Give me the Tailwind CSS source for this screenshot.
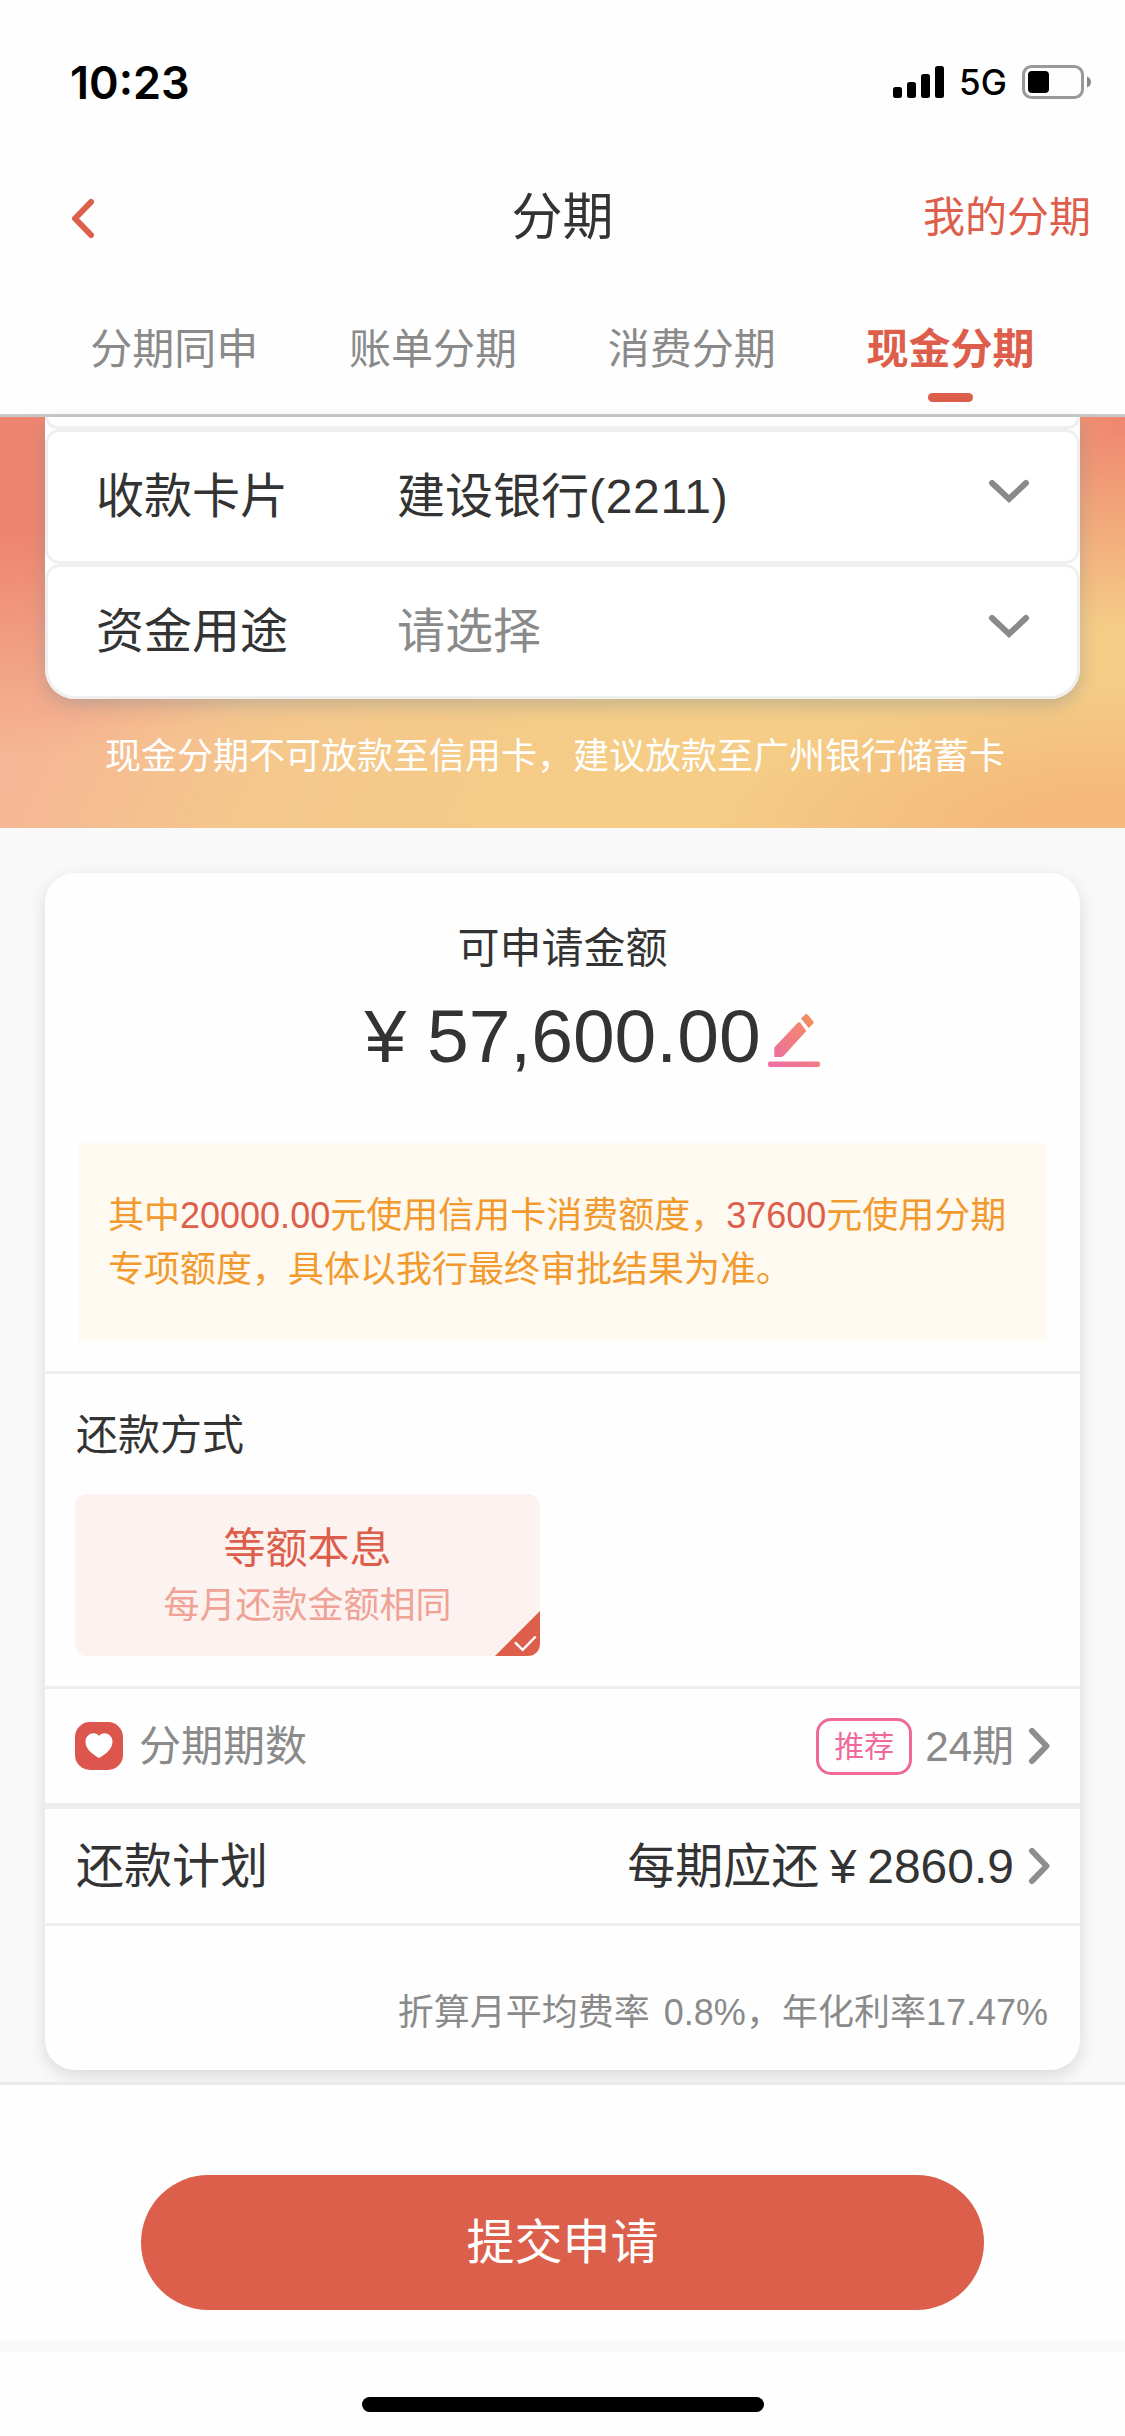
<!DOCTYPE html>
<html lang="zh-CN">
<head>
<meta charset="utf-8">
<title>分期</title>
<script src="https://cdn.jsdelivr.net/npm/@tailwindcss/browser@4"></script>
</head>
<body class="w-[1125px] h-[2436px] overflow-hidden bg-[#f9f9f9] text-[#333] font-['Liberation_Sans','Noto_Sans_CJK_SC',sans-serif] flex flex-col">
<header class="h-[417px] shrink-0 bg-[#fefefe] border-b-3 border-[#c9c9c9] flex flex-col">
  <div class="h-[150px] flex items-center justify-between pl-[70px] pr-[33px] pt-[14px] font-['Inter',sans-serif] text-black">
    <span class="text-[45px] font-semibold leading-none">10:23</span>
    <div class="flex items-center">
      <svg class="w-[51px] h-[32px]" viewBox="0 0 51 32"><rect x="0" y="21" width="9" height="11" rx="2.5"/><rect x="14" y="16" width="9" height="16" rx="2.5"/><rect x="28" y="8" width="9" height="24" rx="2.5"/><rect x="42" y="0" width="9" height="32" rx="2.5"/></svg>
      <span class="w-[48px] ml-[15px] text-[35px] font-medium leading-none">5G</span>
      <svg class="ml-[15px] w-[70px] h-[34px]" viewBox="0 0 70 34"><rect x="1.5" y="1.5" width="59" height="31" rx="8" fill="none" stroke="#999" stroke-width="3"/><rect x="6" y="6" width="21" height="22" rx="4"/><path d="M65 11.5q4 1.500 4 5.500t-4 5.500z" fill="#888"/></svg>
    </div>
  </div>
  <nav class="h-[132px] grid grid-cols-3 items-center pl-[69px] pr-[34px] pt-[3px] text-[#dd5e4b]">
    <svg class="w-[26px] h-[42px]" viewBox="0 0 26 42" fill="none" stroke="currentColor" stroke-width="6" stroke-linecap="round" stroke-linejoin="round"><path d="M22 5 6 21.500 22 38"/></svg>
    <h1 class="text-[51px] text-[#333] whitespace-nowrap justify-self-center mr-[35px] leading-none">分期</h1>
    <a class="text-[42px] justify-self-end leading-none">我的分期</a>
  </nav>
  <div class="h-[132px] px-[45px] grid grid-cols-4 text-center text-[42px] leading-[136px] text-[#8a8a8a]">
    <span>分期同申</span><span>账单分期</span><span>消费分期</span>
    <span class="relative font-bold text-[#dd5e4b]">现金分期<i class="absolute left-1/2 -ml-[23px] top-[111px] w-[45px] h-[9px] rounded-full bg-[#dd5e4b]"></i></span>
  </div>
</header>

<section class="h-[411px] shrink-0 px-[45px] bg-[radial-gradient(ellipse_450px_340px_at_0%_0%,#ee8570_0%,#ee8570_35%,#ee857000_100%),radial-gradient(ellipse_330px_210px_at_100%_0%,#ef8570_0%,#ef857000_100%),radial-gradient(ellipse_420px_140px_at_100%_100%,#f4b97b_0%,#f4b97b_25%,#f4b97b00_100%),linear-gradient(115deg,#f5b795_0%,#f5b795_14%,#f5c78c_32%,#f5cd86_60%,#f5cb86_100%)]">
  <div class="h-[282px] bg-white rounded-b-[30px] shadow-[0_6px_18px_rgba(120,140,150,0.4)] overflow-hidden text-[48px]">
    <div class="h-[12px] border-3 border-t-0 border-[#efefef] rounded-b-[15px]"></div>
    <div class="h-[135px] border-3 border-[#efefef] rounded-[15px] flex items-center pl-[48px] pr-[46px]">
      <span class="w-[301px]">收款卡片</span><span class="flex-1">建设银行<span class="tracking-[0.7px]">(2211)</span></span>
      <svg class="w-[44px] h-[28px] -mt-[12px]" viewBox="0 0 44 28" fill="none" stroke="#8a8a8a" stroke-width="6" stroke-linecap="round"><path d="M5 6l17 16L39 6"/></svg>
    </div>
    <div class="h-[135px] border-3 border-[#efefef] rounded-t-[15px] rounded-b-[30px] flex items-center pl-[48px] pr-[46px]">
      <span class="w-[301px]">资金用途</span><span class="flex-1 text-[#8a8a8a]">请选择</span>
      <svg class="w-[44px] h-[28px] -mt-[12px]" viewBox="0 0 44 28" fill="none" stroke="#8a8a8a" stroke-width="6" stroke-linecap="round"><path d="M5 6l17 16L39 6"/></svg>
    </div>
  </div>
  <p class="pl-[60px] pt-[31px] leading-[54px] text-[36px] text-white whitespace-nowrap">现金分期不可放款至信用卡，建议放款至广州银行储蓄卡</p>
</section>

<main class="h-[1254px] shrink-0 px-[45px] pt-[45px] overflow-hidden">
  <div class="h-[1197px] bg-[#fefefe] rounded-[30px] shadow-[0_6px_18px_rgba(0,0,0,0.13)] flex flex-col">
    <div class="h-[501px] border-b-3 border-[#eee] px-[33px] pt-[43px] text-center">
      <h2 class="text-[42px] leading-[66px]">可申请金额</h2>
      <div class="relative text-[75px] leading-[108px]">¥ 57,600.00
        <svg class="absolute left-[688px] top-[31px] w-[56px] h-[54px]" viewBox="0 0 56 54" fill="url(#pen)"><defs><linearGradient id="pen" gradientUnits="userSpaceOnUse" x1="8" y1="46" x2="44" y2="10"><stop stop-color="#ee6fa0"/><stop offset="1" stop-color="#f28b66"/></linearGradient></defs><path d="M8.300 34.500 31.500 10q1.500-1.500 3 0l5.800 8L18 42.500Q16.500 44 14.500 44H8.300zM35 5.500l4-4q1.500-1 3 .5l5 6q1 1.500 0 3l-4.300 4z"/><rect x="2" y="48.500" width="52" height="5.500" rx="2"/></svg>
      </div>
      <p class="mt-[53px] h-[198px] bg-[#fef9f1] pt-[46px] px-[30px] text-left text-[36px] leading-[54px] text-[#f29a2e] whitespace-nowrap">其中<b class="font-normal text-[#dd5e4b]">20000.00</b>元使用信用卡消费额度，<b class="font-normal text-[#dd5e4b]">37600</b>元使用分期<br>专项额度，具体以我行最终审批结果为准。</p>
    </div>
    <div class="h-[315px] border-b-3 border-[#eee] px-[30px] pt-[29px]">
      <h3 class="pl-px text-[42px] leading-[66px]">还款方式</h3>
      <div class="relative mt-[25px] w-[465px] h-[162px] rounded-[12px] bg-[#fcf2ef] overflow-hidden text-center pt-[25px]">
        <div class="text-[42px] leading-[60px] text-[#dd5e4b]">等额本息</div>
        <div class="text-[36px] leading-[54px] text-[#f0a296]">每月还款金额相同</div>
        <svg class="absolute right-0 bottom-0 w-[45px] h-[45px]" viewBox="0 0 45 45"><path d="M45 0v45H0z" fill="#dd5e4b"/><path d="M20 31.300l7.700 7.500L40.700 25.500" fill="none" stroke="#fff" stroke-width="2.500"/></svg>
      </div>
    </div>
    <div class="h-[120px] border-b-6 border-[#eee] pl-[30px] pr-[27px] flex items-center text-[42px] text-[#8a8a8a]">
      <svg class="w-[48px] h-[48px]" viewBox="0 0 48 48"><rect width="48" height="48" rx="15" fill="#dd564e"/><path d="M24 36C17 32 10.500 27 10.500 19.500c0-8 10-11 13.500-5.500 3.500-5.500 13.500-2.500 13.500 5.500C37.500 27 31 32 24 36z" fill="#fff"/></svg>
      <span class="ml-[16px] flex-1">分期期数</span>
      <span class="w-[96px] h-[57px] border-3 border-[#f0699a] rounded-[15px] text-[30px] leading-[51px] text-center text-[#f0699a]">推荐</span>
      <span class="ml-[13px]">24期</span>
      <svg class="ml-[12px] w-[27px] h-[42px]" viewBox="0 0 27 42" fill="none" stroke="#8e8e8e" stroke-width="6" stroke-linecap="round" stroke-linejoin="round"><path d="M6 6l14.500 15L6 36"/></svg>
    </div>
    <div class="h-[117px] border-b-3 border-[#eee] pl-[31px] pr-[27px] flex items-center text-[48px]">
      <span class="flex-1 pt-[2px]">还款计划</span>
      <span class="pt-[2px]">每期应还<span class="inline-block w-[48px] text-center">¥</span>2860.9</span>
      <svg class="ml-[12px] w-[27px] h-[42px]" viewBox="0 0 27 42" fill="none" stroke="#8e8e8e" stroke-width="6" stroke-linecap="round" stroke-linejoin="round"><path d="M6 6l14.500 15L6 36"/></svg>
    </div>
    <p class="pt-[60px] pr-[32px] text-right text-[36px] leading-[54px] text-[#8a8a8a]">折算月平均费率 <span class="ml-[4px]">0.8%，</span>年化利率17.47%</p>
  </div>
</main>

<footer class="h-[354px] shrink-0 bg-[#fefefe] border-t-3 border-[#ebebeb] flex flex-col items-center">
  <button class="mt-[90px] w-[843px] h-[135px] rounded-full bg-[#db5f4b] text-white text-[48px]">提交申请</button>
  <div class="mt-[30px] h-[12px] w-full bg-[#f9f9f9]"></div>
  <div class="mt-[45px] w-[402px] h-[15px] rounded-full bg-black"></div>
</footer>
</body>
</html>
